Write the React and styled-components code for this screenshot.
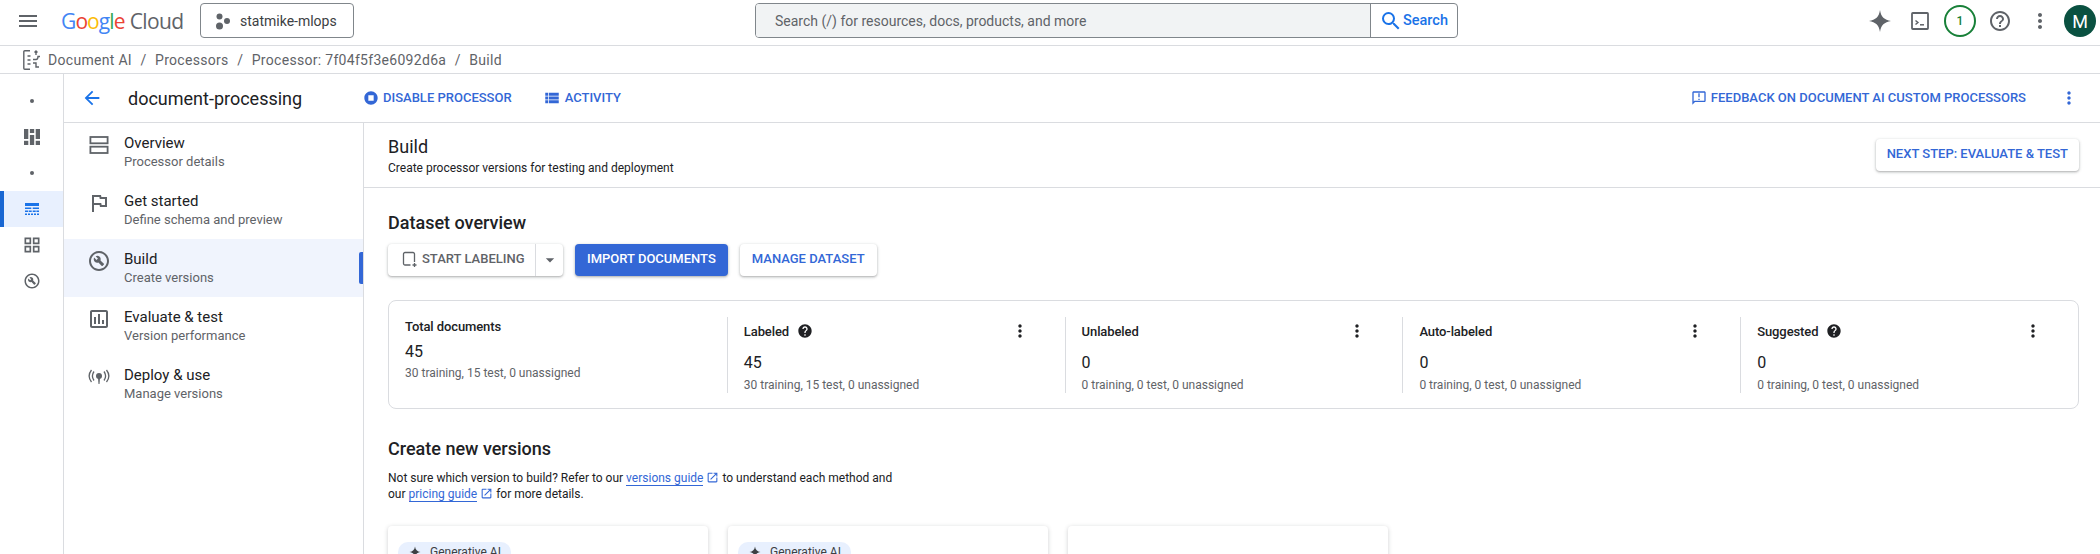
import styled, { createGlobalStyle } from "styled-components";
import {
  MdMenu,
  MdArrowBack,
  MdStopCircle,
  MdViewList,
  MdOutlineAnnouncement,
  MdHelp,
  MdHelpOutline,
  MdMoreVert,
  MdOutlineFlag,
  MdOutlineBuildCircle,
  MdOutlineAssessment,
  MdOutlineGridView,
  MdArrowDropDown,
  MdSearch,
  MdOpenInNew,
} from "react-icons/md";

const GlobalStyle = createGlobalStyle`
  html, body {
    margin: 0;
    padding: 0;
    height: 554px;
    overflow: hidden;
    background: #fff;
    font-family: Roboto, "Liberation Sans", sans-serif;
    color: #202124;
  }
  * { box-sizing: border-box; }
`;

const Page = styled.div`
  width: 2100px;
  height: 554px;
  overflow: hidden;
  display: flex;
  flex-direction: column;
`;

/* top bar */
const TopBar = styled.header`
  height: 46px;
  flex: none;
  display: flex;
  align-items: flex-start;
  border-bottom: 1px solid #dadce0;
  padding-top: 3px;
`;
const MenuBtn = styled.div`
  width: 61px;
  height: 35px;
  display: flex;
  align-items: center;
  padding-left: 16px;
  color: #5f6368;
`;
const Logo = styled.div`
  width: 139px;
  height: 35px;
  display: flex;
  align-items: center;
  font-family: "Open Sans", sans-serif;
  font-size: 21px;
  letter-spacing: -0.9px;
  color: #5f6368;
`;
const Letter = styled.span`
  color: ${(p) => p.$c};
`;
const CloudWord = styled.span`
  margin-left: 5px;
  letter-spacing: -0.6px;
`;
const ProjectBtn = styled.div`
  width: 154px;
  height: 35px;
  border: 1px solid #80868b;
  border-radius: 4px;
  display: flex;
  align-items: center;
  padding-left: 14px;
  gap: 9px;
  font-size: 14px;
  color: #3c4043;
`;
const SearchBox = styled.div`
  margin-left: 401px;
  width: 703px;
  height: 35px;
  border: 1px solid #80868b;
  border-radius: 4px;
  display: flex;
  overflow: hidden;
`;
const SearchInput = styled.div`
  width: 615px;
  background: #f1f3f4;
  border-right: 1px solid #80868b;
  display: flex;
  align-items: center;
  padding-left: 19px;
  font-size: 14px;
  color: #5f6368;
`;
const SearchBtn = styled.div`
  flex: 1;
  display: flex;
  align-items: center;
  padding-left: 8px;
  font-size: 14.5px;
  font-weight: 500;
  color: #1a73e8;
`;
const TopIcons = styled.div`
  margin-left: auto;
  display: flex;
  align-items: center;
  height: 36px;
`;
const TopIcon = styled.div`
  width: 40px;
  height: 36px;
  display: flex;
  align-items: center;
  justify-content: center;
  color: #5f6368;
`;
const CountRing = styled.div`
  width: 32px;
  height: 32px;
  border: 2px solid #188038;
  border-radius: 50%;
  display: flex;
  align-items: center;
  justify-content: center;
  font-size: 12px;
  font-weight: 500;
  color: #188038;
`;
const Avatar = styled.div`
  width: 32px;
  height: 32px;
  border-radius: 50%;
  background: #0a5141;
  color: #fff;
  display: flex;
  align-items: center;
  justify-content: center;
  font-size: 18px;
`;

/* breadcrumb */
const Crumbs = styled.nav`
  height: 28px;
  flex: none;
  display: flex;
  align-items: center;
  border-bottom: 1px solid #dadce0;
  padding-left: 23px;
  font-size: 14px;
  letter-spacing: 0.3px;
  color: #5f6368;
`;
const CrumbIcon = styled.svg`
  margin-right: 7px;
`;
const Slash = styled.span`
  margin: 0 8.5px;
`;

/* body */
const Body = styled.div`
  flex: 1;
  display: flex;
  min-height: 0;
`;
const Rail = styled.aside`
  width: 64px;
  flex: none;
  padding-top: 9px;
  border-right: 1px solid #dadce0;
  display: flex;
  flex-direction: column;
`;
const RailItem = styled.div`
  height: 36px;
  display: flex;
  align-items: center;
  justify-content: center;
  color: #5f6368;
  background: ${(p) => (p.$active ? "#e8f0fe" : "transparent")};
  border-left: ${(p) => (p.$active ? "4px solid #1967d2" : "none")};
  padding-right: ${(p) => (p.$active ? "4px" : "0")};
`;
const Dot = styled.div`
  width: 4px;
  height: 4px;
  border-radius: 50%;
  background: #5f6368;
`;
const Main = styled.div`
  flex: 1;
  display: flex;
  flex-direction: column;
  min-width: 0;
`;
const SubHeader = styled.div`
  height: 49px;
  flex: none;
  display: flex;
  align-items: center;
  border-bottom: 1px solid #dadce0;
  padding-left: 17px;
  padding-right: 21px;
`;
const BackBtn = styled.div`
  width: 47px;
  display: flex;
  color: #1a73e8;
`;
const Name = styled.div`
  width: 235px;
  font-size: 18px;
  color: #202124;
`;
const TextAction = styled.div`
  display: flex;
  align-items: center;
  gap: 4px;
  font-size: 13px;
  font-weight: 500;
  line-height: 16px;
  color: #3367d6;
  margin-right: ${(p) => p.$mr || "31px"};
`;
const PushRight = styled.div`
  margin-left: auto;
  display: flex;
  align-items: center;
`;
const Columns = styled.div`
  flex: 1;
  display: flex;
  min-height: 0;
`;

/* sidebar */
const Side = styled.nav`
  width: 300px;
  flex: none;
  border-right: 1px solid #dadce0;
`;
const SideRow = styled.div`
  height: 58px;
  display: flex;
  align-items: center;
  position: relative;
  background: ${(p) => (p.$active ? "#f0f4fd" : "transparent")};
`;
const SideIcon = styled.div`
  width: 60px;
  padding-left: 23px;
  margin-bottom: 14px;
  display: flex;
  color: #5f6368;
`;
const SideTitle = styled.div`
  font-size: 15px;
  line-height: 20px;
  color: #202124;
`;
const SideSub = styled.div`
  font-size: 13px;
  line-height: 18px;
  color: #5f6368;
`;
const Indicator = styled.div`
  position: absolute;
  right: 0;
  top: 13px;
  width: 4px;
  height: 32px;
  border-radius: 2px 0 0 2px;
  background: #3367d6;
`;

/* content */
const Content = styled.main`
  flex: 1;
  min-width: 0;
`;
const PageHead = styled.div`
  height: 65px;
  display: flex;
  justify-content: space-between;
  align-items: flex-start;
  border-bottom: 1px solid #dadce0;
  padding: 13px 21px 0 24px;
`;
const PageTitle = styled.div`
  font-size: 18px;
  line-height: 22px;
`;
const PageSub = styled.div`
  font-size: 12px;
  line-height: 20px;
`;
const Raised = styled.div`
  height: 32px;
  border-radius: 4px;
  background: ${(p) => (p.$primary ? "#3367d6" : "#fff")};
  color: ${(p) => (p.$primary ? "#fff" : "#3367d6")};
  box-shadow: 0 1px 2px rgba(60, 64, 67, 0.3), 0 1px 3px 1px rgba(60, 64, 67, 0.12);
  display: flex;
  align-items: center;
  padding: 0 12px 3px;
  font-size: 13px;
  font-weight: 500;
`;
const NextBtn = styled(Raised)`
  margin-top: 3px;
  padding: 0 11px 3px;
`;
const Section = styled.section`
  padding: 0 21px 0 24px;
`;
const H2 = styled.h2`
  margin: 0;
  padding-top: ${(p) => p.$top};
  font-size: 18px;
  font-weight: 500;
  line-height: 24px;
`;
const ButtonRow = styled.div`
  display: flex;
  gap: 12px;
  margin-top: 9px;
`;
const Split = styled(Raised)`
  padding: 0;
  color: #5f6368;
  width: 175px;
`;
const SplitMain = styled.div`
  width: 148px;
  height: 100%;
  display: flex;
  align-items: center;
  padding: 0 0 3px 14px;
  gap: 4px;
  border-right: 1px solid #dadce0;
`;
const SplitCaret = styled.div`
  flex: 1;
  display: flex;
  justify-content: center;
`;
const StatCard = styled.div`
  margin-top: 24px;
  height: 109px;
  border: 1px solid #dadce0;
  border-radius: 8px;
  padding: 16px 0;
  display: grid;
  grid-template-columns: repeat(5, 1fr);
`;
const Stat = styled.div`
  padding: ${(p) => (p.$first ? "0" : "5px")} 35px 0 16px;
  border-left: ${(p) => (p.$first ? "none" : "1px solid #dadce0")};
  height: 76px;
`;
const StatHead = styled.div`
  display: flex;
  align-items: center;
  height: 18px;
  font-size: 13px;
  font-weight: 500;
  letter-spacing: -0.1px;
  gap: 8px;
`;
const Kebab = styled.div`
  margin-left: auto;
  display: flex;
`;
const StatValue = styled.div`
  font-size: 16px;
  line-height: 24px;
  margin-top: ${(p) => (p.$first ? "5px" : "11px")};
`;
const StatSub = styled.div`
  font-size: 12px;
  line-height: 18px;
  margin-top: ${(p) => (p.$first ? "0" : "1px")};
  color: #5f6368;
`;
const Blurb = styled.p`
  margin: 9px 0 0;
  width: 520px;
  font-size: 12px;
  line-height: 16px;
`;
const GuideLink = styled.a`
  color: #3367d6;
  border-bottom: 1px solid #3367d6;
`;
const LinkOut = styled(MdOpenInNew)`
  vertical-align: -2px;
  color: #3367d6;
`;
const CardRow = styled.div`
  display: flex;
  gap: 20px;
  margin-top: 24px;
`;
const VersionCard = styled.div`
  width: 320px;
  height: 60px;
  border-radius: 4px;
  box-shadow: 0 1px 4px rgba(60, 64, 67, 0.25);
  padding: 16px 10px;
`;
const Chip = styled.div`
  width: 113px;
  height: 20px;
  border-radius: 10px 10px 0 0;
  background: #e8f0fe;
  display: flex;
  align-items: center;
  padding-left: 11px;
  gap: 9px;
  font-size: 12px;
  color: #3c4043;
`;

const Spark = ({ size = 24, color = "#5f6368" }) => (
  <svg width={size} height={size} viewBox="0 0 24 24" fill={color}>
    <path d="M12 1c.9 6.6 4.400 10.100 11 11-6.600.9-10.100 4.400-11 11-.9-6.600-4.400-10.100-11-11 6.600-.9 10.100-4.400 11-11z" />
  </svg>
);

const DashIcon = () => (
  <svg width="16" height="16" viewBox="0 0 16 16" fill="#5f6368">
    <rect x="0" y="0" width="4.300" height="10" />
    <rect x="0" y="11.800" width="4.300" height="4.200" />
    <rect x="5.900" y="0" width="4.300" height="4" />
    <rect x="5.900" y="6" width="4.300" height="10" />
    <rect x="11.700" y="0" width="4.300" height="10" />
    <rect x="11.700" y="11.800" width="4.300" height="4.200" />
  </svg>
);

const TableIcon = () => (
  <svg width="14" height="12" viewBox="0 0 14 12" fill="#1a73e8">
    <rect x="0" y="0" width="14" height="3" />
    <rect x="0" y="4.500" width="6.300" height="1.500" />
    <rect x="7.700" y="4.500" width="6.300" height="1.500" />
    <rect x="0" y="7.500" width="3" height="1.500" />
    <rect x="3.700" y="7.500" width="3" height="1.500" />
    <rect x="7.700" y="7.500" width="3" height="1.500" />
    <rect x="11.400" y="7.500" width="2.600" height="1.500" />
    <rect x="0" y="10.500" width="2" height="1.500" />
    <rect x="3" y="10.500" width="2" height="1.500" />
    <rect x="6" y="10.500" width="2" height="1.500" />
    <rect x="9" y="10.500" width="2" height="1.500" />
    <rect x="12" y="10.500" width="2" height="1.500" />
  </svg>
);

const DocAiIcon = () => (
  <CrumbIcon width="18" height="20" viewBox="0 0 18 20" fill="none" stroke="#5f6368" strokeWidth="1.400">
    <path d="M7 .8H1.800a1 1 0 0 0-1 1v16.400a1 1 0 0 0 1 1H7" />
    <path d="M4.500 6h3M4.500 10h3M4.500 14h3" strokeWidth="1.600" />
    <path d="M13 5V1M11.500 2.500L13 1l1.500 1.500" />
    <path d="M10 9.500h3c1.500 0 2-1 2-3h2" />
    <path d="M10 13h3v4h3" />
  </CrumbIcon>
);

const ProjectDots = () => (
  <svg width="16" height="18" viewBox="0 0 16 18" fill="#5f6368">
    <circle cx="4.500" cy="4.500" r="3" />
    <circle cx="12" cy="9" r="3" />
    <circle cx="4.500" cy="14" r="3.500" />
  </svg>
);

const TerminalIcon = () => (
  <svg width="18" height="18" viewBox="0 0 18 18" fill="none" stroke="#5f6368" strokeWidth="1.800">
    <rect x="1" y="1" width="16" height="16" rx="0.800" />
    <path d="M4.500 8.500l2.400 2-2.400 2" strokeWidth="1.500" />
    <path d="M9 12.800h4" strokeWidth="1.500" />
  </svg>
);

const AgendaIcon = () => (
  <svg width="24" height="24" viewBox="0 0 24 24" fill="none" stroke="#5f6368" strokeWidth="1.800">
    <rect x="3.400" y="4" width="17.200" height="6.300" />
    <rect x="3.400" y="13.700" width="17.200" height="6.300" />
  </svg>
);

const Antenna = () => (
  <svg width="24" height="22" viewBox="0 0 24 22" fill="none" stroke="#5f6368" strokeWidth="1.300">
    <circle cx="12" cy="10" r="3" fill="#5f6368" stroke="none" />
    <path d="M11 12h2l-.5 6h-1z" fill="#5f6368" stroke="none" />
    <path d="M7 5.500c-2 2.800-2 6.200 0 9M17 5.500c2 2.800 2 6.200 0 9M4.500 4c-3 3.800-3 8.200 0 12M19.500 4c3 3.800 3 8.200 0 12" />
  </svg>
);

const LabelIcon = () => (
  <svg width="16" height="18" viewBox="0 0 16 18" fill="none" stroke="#5f6368" strokeWidth="1.300">
    <path d="M8.500 15H3a1.500 1.500 0 0 1-1.500-1.500V4A1.500 1.500 0 0 1 3 2.500h8A1.500 1.500 0 0 1 12.500 4v8" />
    <path d="M12.500 13v4M10.500 15h4" />
  </svg>
);

const navItems = [
  { title: "Overview", sub: "Processor details", icon: <AgendaIcon /> },
  { title: "Get started", sub: "Define schema and preview", icon: <MdOutlineFlag size={24} /> },
  { title: "Build", sub: "Create versions", icon: <MdOutlineBuildCircle size={24} />, active: true },
  { title: "Evaluate & test", sub: "Version performance", icon: <MdOutlineAssessment size={24} /> },
  { title: "Deploy & use", sub: "Manage versions", icon: <Antenna /> },
];

const stats = [
  { title: "Total documents", value: "45", sub: "30 training, 15 test, 0 unassigned", first: true },
  { title: "Labeled", value: "45", sub: "30 training, 15 test, 0 unassigned", help: true },
  { title: "Unlabeled", value: "0", sub: "0 training, 0 test, 0 unassigned" },
  { title: "Auto-labeled", value: "0", sub: "0 training, 0 test, 0 unassigned" },
  { title: "Suggested", value: "0", sub: "0 training, 0 test, 0 unassigned", help: true },
];

const googleLetters = [
  ["G", "#4285f4"],
  ["o", "#ea4335"],
  ["o", "#fbbc04"],
  ["g", "#4285f4"],
  ["l", "#34a853"],
  ["e", "#ea4335"],
];

export default function App() {
  return (
    <Page>
      <GlobalStyle />
      <TopBar>
        <MenuBtn>
          <MdMenu size={24} />
        </MenuBtn>
        <Logo>
          {googleLetters.map(([l, c], i) => (
            <Letter key={i} $c={c}>
              {l}
            </Letter>
          ))}
          <CloudWord>Cloud</CloudWord>
        </Logo>
        <ProjectBtn>
          <ProjectDots />
          statmike-mlops
        </ProjectBtn>
        <SearchBox>
          <SearchInput>Search (/) for resources, docs, products, and more</SearchInput>
          <SearchBtn>
            <MdSearch size={24} />
            Search
          </SearchBtn>
        </SearchBox>
        <TopIcons>
          <TopIcon>
            <Spark />
          </TopIcon>
          <TopIcon>
            <TerminalIcon />
          </TopIcon>
          <TopIcon>
            <CountRing>1</CountRing>
          </TopIcon>
          <TopIcon>
            <MdHelpOutline size={24} />
          </TopIcon>
          <TopIcon>
            <MdMoreVert size={24} />
          </TopIcon>
          <TopIcon>
            <Avatar>M</Avatar>
          </TopIcon>
        </TopIcons>
      </TopBar>

      <Crumbs>
        <DocAiIcon />
        Document AI
        <Slash>/</Slash>
        Processors
        <Slash>/</Slash>
        Processor: 7f04f5f3e6092d6a
        <Slash>/</Slash>
        Build
      </Crumbs>

      <Body>
        <Rail>
          <RailItem>
            <Dot />
          </RailItem>
          <RailItem>
            <DashIcon />
          </RailItem>
          <RailItem>
            <Dot />
          </RailItem>
          <RailItem $active>
            <TableIcon />
          </RailItem>
          <RailItem>
            <MdOutlineGridView size={20} />
          </RailItem>
          <RailItem>
            <MdOutlineBuildCircle size={18} />
          </RailItem>
        </Rail>

        <Main>
          <SubHeader>
            <BackBtn>
              <MdArrowBack size={22} />
            </BackBtn>
            <Name>document-processing</Name>
            <TextAction>
              <MdStopCircle size={16} />
              DISABLE PROCESSOR
            </TextAction>
            <TextAction>
              <MdViewList size={18} />
              ACTIVITY
            </TextAction>
            <PushRight>
              <TextAction $mr="33px">
                <MdOutlineAnnouncement size={16} />
                FEEDBACK ON DOCUMENT AI CUSTOM PROCESSORS
              </TextAction>
              <TextAction $mr="0">
                <MdMoreVert size={20} />
              </TextAction>
            </PushRight>
          </SubHeader>

          <Columns>
            <Side>
              {navItems.map((n) => (
                <SideRow key={n.title} $active={n.active}>
                  <SideIcon>{n.icon}</SideIcon>
                  <div>
                    <SideTitle>{n.title}</SideTitle>
                    <SideSub>{n.sub}</SideSub>
                  </div>
                  {n.active && <Indicator />}
                </SideRow>
              ))}
            </Side>

            <Content>
              <PageHead>
                <div>
                  <PageTitle>Build</PageTitle>
                  <PageSub>Create processor versions for testing and deployment</PageSub>
                </div>
                <NextBtn>NEXT STEP: EVALUATE &amp; TEST</NextBtn>
              </PageHead>

              <Section>
                <H2 $top="23px">Dataset overview</H2>
                <ButtonRow>
                  <Split>
                    <SplitMain>
                      <LabelIcon />
                      START LABELING
                    </SplitMain>
                    <SplitCaret>
                      <MdArrowDropDown size={20} />
                    </SplitCaret>
                  </Split>
                  <Raised $primary>IMPORT DOCUMENTS</Raised>
                  <Raised>MANAGE DATASET</Raised>
                </ButtonRow>

                <StatCard>
                  {stats.map((s) => (
                    <Stat key={s.title} $first={s.first}>
                      <StatHead>
                        {s.title}
                        {s.help && <MdHelp size={16} color="#202124" />}
                        {!s.first && (
                          <Kebab>
                            <MdMoreVert size={20} color="#202124" />
                          </Kebab>
                        )}
                      </StatHead>
                      <StatValue $first={s.first}>{s.value}</StatValue>
                      <StatSub $first={s.first}>{s.sub}</StatSub>
                    </Stat>
                  ))}
                </StatCard>

                <H2 $top="28px">Create new versions</H2>
                <Blurb>
                  Not sure which version to build? Refer to our <GuideLink>versions guide</GuideLink>{" "}
                  <LinkOut size={13} /> to understand each method and our{" "}
                  <GuideLink>pricing guide</GuideLink> <LinkOut size={13} /> for more details.
                </Blurb>
                <CardRow>
                  <VersionCard>
                    <Chip>
                      <Spark size={12} color="#3c4043" />
                      Generative AI
                    </Chip>
                  </VersionCard>
                  <VersionCard>
                    <Chip>
                      <Spark size={12} color="#3c4043" />
                      Generative AI
                    </Chip>
                  </VersionCard>
                  <VersionCard />
                </CardRow>
              </Section>
            </Content>
          </Columns>
        </Main>
      </Body>
    </Page>
  );
}
